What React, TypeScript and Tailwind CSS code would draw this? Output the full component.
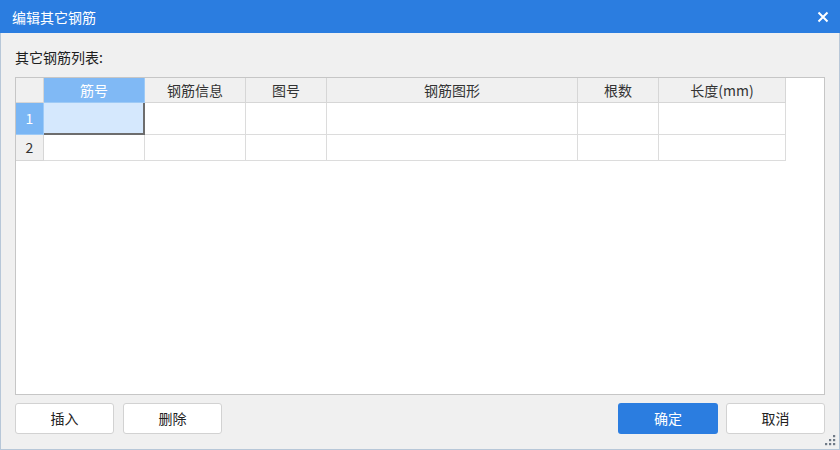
import React from "react";

const cols = ["筋号", "钢筋信息", "图号", "钢筋图形", "根数", "长度(mm)"];

function Grip() {
  const dots: [number, number][] = [
    [8, 0],
    [4, 4],
    [8, 4],
    [0, 8],
    [4, 8],
    [8, 8],
  ];
  return (
    <svg width="11" height="11" viewBox="0 0 11 11" className="absolute right-[3px] bottom-[3px]">
      {dots.map(([x, y], i) => (
        <rect key={i} x={x} y={y} width="2.2" height="2.2" fill="#6f7a86" />
      ))}
    </svg>
  );
}

export default function App() {
  const font = { fontFamily: '"Noto Sans CJK SC", "Noto Sans", sans-serif' };
  return (
    <div className="w-[840px] h-[450px] flex flex-col text-[14px] text-[#222]" style={font}>
      <div className="h-[33px] bg-[#2b7de0] flex items-center justify-between pl-[12px] pr-[11px] text-white">
        <span className="text-[14px] leading-none">编辑其它钢筋</span>
        <svg width="12" height="12" viewBox="0 0 12 12">
          <path d="M1.5 1.5 L10.5 10.5 M10.5 1.5 L1.5 10.5" stroke="white" strokeWidth="2" />
        </svg>
      </div>
      <div className="relative flex-1 flex flex-col bg-[#f0f0f0] border-x border-b border-[#b7c7d8] px-[14px]">
        <div className="pt-[14px] h-[34px] leading-[20px] text-[14px] text-[#1e1e1e]">其它钢筋列表:</div>
        <div className="mt-[10px] h-[318px] bg-white border border-[#c6c6c6]">
          <div className="grid grid-cols-[28px_101px_101px_81px_251px_81px_127px] grid-rows-[25px_32px_26px] w-fit text-[14px]">
            <div className="bg-[#f0f0f0] border-r border-b border-[#d6d6d6]" />
            {cols.map((c, i) => (
              <div
                key={c}
                className={
                  i === 0
                    ? "bg-[#80b9f5] text-white border-r border-b border-[#9ecaf6] flex items-center justify-center"
                    : "bg-[#f0f0f0] text-[#333] border-r border-b border-[#d6d6d6] flex items-center justify-center"
                }
              >
                {c}
              </div>
            ))}
            <div className="bg-[#7ab6f4] text-white border-r border-b border-[#9ecaf6] flex items-center justify-center">1</div>
            <div className="bg-[#d5e8fd] border-r-2 border-b-2 border-[#6d6d6d]" />
            {[0, 1, 2, 3, 4].map((i) => (
              <div key={"a" + i} className="border-r border-b border-[#dcdcdc]" />
            ))}
            <div className="bg-[#f0f0f0] text-[#333] border-r border-b border-[#d6d6d6] flex items-center justify-center">2</div>
            {[0, 1, 2, 3, 4, 5].map((i) => (
              <div key={"b" + i} className="border-r border-b border-[#dcdcdc]" />
            ))}
          </div>
        </div>
        <div className="mt-[8px] flex items-center">
          <button className="w-[99px] h-[31px] bg-white border border-[#d2d2d2] rounded-[3px] text-[14px] text-[#222]">插入</button>
          <button className="ml-[9px] w-[99px] h-[31px] bg-white border border-[#d2d2d2] rounded-[3px] text-[14px] text-[#222]">删除</button>
          <div className="flex-1" />
          <button className="w-[100px] h-[31px] bg-[#2b7de0] rounded-[3px] text-[14px] text-white">确定</button>
          <button className="ml-[8px] w-[99px] h-[31px] bg-white border border-[#d2d2d2] rounded-[3px] text-[14px] text-[#222]">取消</button>
        </div>
        <Grip />
      </div>
    </div>
  );
}
